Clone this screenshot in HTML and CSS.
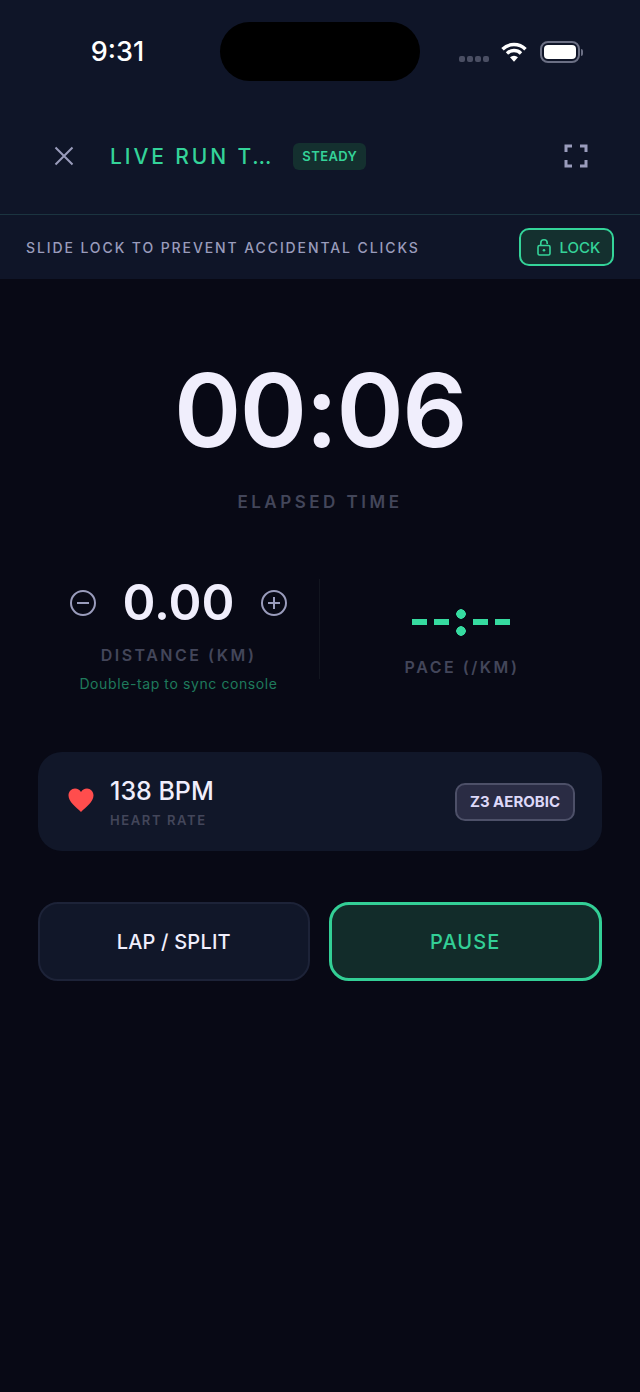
FILE: index.html
```html
<!DOCTYPE html>
<html lang="en">
<head>
  <meta charset="UTF-8" />
  <meta name="viewport" content="width=device-width, initial-scale=1.0" />
  <title>Live Run</title>
  <link rel="stylesheet" href="styles.css">
</head>
<body>
  <div class="top">
    <div class="status-bar">
      <span class="clock">9:31</span>
      <div class="island"></div>
      <div class="status-icons">
        <div class="signal"><i></i><i></i><i></i><i></i></div>
        <svg class="wifi" width="26" height="20" viewBox="0 0 26 20">
          <path d="M1.500 7.200a16.500 16.500 0 0 1 23 0" fill="none" stroke="#fff" stroke-width="3.500"/>
          <path d="M6 11.400a10.200 10.200 0 0 1 14 0" fill="none" stroke="#fff" stroke-width="3.500"/>
          <path d="M9 15.200a6 6 0 0 1 8 0l-4 4.600z" fill="#fff"/>
        </svg>
        <div class="battery"><div class="battery-fill"></div></div>
        <div class="battery-cap"></div>
      </div>
    </div>
    <header class="run-header">
      <button class="icon-btn close-btn" aria-label="Close">
        <svg width="20" height="20" viewBox="0 0 20 20"><path d="M1.500 1.500l17 17M18.500 1.500l-17 17" stroke="#9a9cbc" stroke-width="2" fill="none"/></svg>
      </button>
      <h1 class="run-title">LIVE RUN T…</h1>
      <span class="steady">STEADY</span>
      <button class="icon-btn full-btn" aria-label="Fullscreen">
        <svg width="24" height="24" viewBox="0 0 24 24"><path d="M2 8V2h6M16 2h6v6M2 16v6h6M22 16v6h-6" stroke="#9a9cbc" stroke-width="3" fill="none"/></svg>
      </button>
    </header>
    <div class="lock-bar">
      <span class="lock-hint">SLIDE LOCK TO PREVENT ACCIDENTAL CLICKS</span>
      <button class="lock-btn">
        <svg width="14" height="17" viewBox="0 0 14 17"><rect x="1" y="6.500" width="12" height="9.500" rx="1.500" fill="none" stroke="#34d399" stroke-width="1.600"/><path d="M3.800 6.500V4a3.200 3.200 0 0 1 6.400 0v1" fill="none" stroke="#34d399" stroke-width="1.600"/><circle cx="7" cy="11.200" r="1.300" fill="#34d399"/></svg>
        LOCK
      </button>
    </div>
  </div>

  <main class="main">
    <section class="timer">
      <div class="time">00:06</div>
      <div class="label time-label">ELAPSED TIME</div>
    </section>

    <section class="stats">
      <div class="stat stat-distance">
        <div class="distance-row">
          <svg width="28" height="28" viewBox="0 0 28 28"><circle cx="14" cy="14" r="12" fill="none" stroke="#9a9cbc" stroke-width="2"/><path d="M8 14h12" stroke="#9a9cbc" stroke-width="2"/></svg>
          <span class="distance">0.00</span>
          <svg width="28" height="28" viewBox="0 0 28 28"><circle cx="14" cy="14" r="12" fill="none" stroke="#9a9cbc" stroke-width="2"/><path d="M8 14h12M14 8v12" stroke="#9a9cbc" stroke-width="2"/></svg>
        </div>
        <div class="label">DISTANCE (KM)</div>
        <div class="sync-hint">Double-tap to sync console</div>
      </div>
      <div class="stat stat-pace">
        <div class="pace"><i></i><i></i><b></b><i></i><i></i></div>
        <div class="label">PACE (/KM)</div>
      </div>
    </section>

    <section class="hr-card">
      <svg class="heart" width="28" height="26" viewBox="0 0 28 26"><path d="M14 25C9 20 1.500 15 1.500 8.500 1.500 4.500 4.500 1.500 8 1.500c2.600 0 4.800 1.300 6 3.500 1.200-2.200 3.400-3.500 6-3.500 3.500 0 6.500 3 6.500 7C26.500 15 19 20 14 25z" fill="#ff4d4d"/></svg>
      <div class="hr-text">
        <div class="bpm">138 BPM</div>
        <div class="hr-label">HEART RATE</div>
      </div>
      <span class="zone">Z3 AEROBIC</span>
    </section>

    <section class="actions">
      <button class="action lap">LAP / SPLIT</button>
      <button class="action pause">PAUSE</button>
    </section>
  </main>
</body>
</html>
```
FILE: styles.css
```css
* {
  box-sizing: border-box;
}
html, body {
  height: 100%;
}
body {
  margin: 0;
  background-color: #080915;
  color: #f0eefc;
  font-family: Inter, "Liberation Sans", sans-serif;
  display: flex;
  flex-direction: column;
}
button {
  font-family: inherit;
  cursor: pointer;
}
.top {
  background-color: #0f1528;
}
.status-bar {
  height: 100px;
  padding-top: 22px;
  display: flex;
  align-items: flex-start;
  position: relative;
}
.clock {
  width: 235px;
  padding-top: 14px;
  text-align: center;
  font-size: 27px;
  font-weight: 500;
  color: #fff;
  line-height: 32px;
}
.island {
  position: absolute;
  left: 220px;
  top: 22px;
  width: 200px;
  height: 59px;
  background: #000;
  border-radius: 30px;
}
.status-icons {
  margin-left: 224px;
  padding-top: 19px;
  display: flex;
  align-items: center;
}
.signal {
  display: flex;
  gap: 2px;
  margin-top: 14px;
  margin-right: 12px;
}
.signal i {
  width: 6px;
  height: 6px;
  border-radius: 2px;
  background: #4a4e63;
}
.wifi {
  margin-right: 13px;
}
.battery {
  width: 40px;
  height: 22px;
  border: 2px solid #6b6f84;
  border-radius: 8px;
  padding: 2px;
}
.battery-fill {
  height: 100%;
  background: #fff;
  border-radius: 4px;
}
.battery-cap {
  width: 2px;
  height: 7px;
  margin-left: 1px;
  background: #6b6f84;
  border-radius: 0 2px 2px 0;
}
.run-header {
  height: 115px;
  padding: 0 0 2px 50px;
  display: flex;
  align-items: center;
  border-bottom: 1px solid #1b3440;
}
.icon-btn {
  background: none;
  border: none;
  padding: 0;
  display: flex;
}
.close-btn {
  margin-left: 4px;
}
.run-title {
  margin: 0 0 0 36px;
  font-size: 21px;
  font-weight: 500;
  letter-spacing: 2.900px;
  color: #34d399;
}
.steady {
  margin-left: 19px;
  padding: 6px 9px;
  background: #14302f;
  border-radius: 6px;
  font-size: 13px;
  font-weight: 600;
  letter-spacing: .4px;
  line-height: 15px;
  color: #34d399;
}
.full-btn {
  margin-left: auto;
  margin-right: 52px;
}
.lock-bar {
  height: 64px;
  padding: 0 26px;
  display: flex;
  align-items: center;
  justify-content: space-between;
}
.lock-hint {
  font-size: 14px;
  font-weight: 500;
  letter-spacing: 1.900px;
  line-height: 19px;
  color: #9a9cbc;
}
.lock-btn {
  width: 95px;
  height: 38px;
  display: flex;
  align-items: center;
  justify-content: center;
  gap: 9px;
  padding: 0 0 0 4px;
  background: #14302f;
  border: 2px solid #34d399;
  border-radius: 10px;
  font-size: 15px;
  font-weight: 500;
  color: #34d399;
}
.main {
  flex: 1;
  padding: 0 38px;
}
.timer {
  padding-top: 66px;
  text-align: center;
}
.time {
  font-size: 102px;
  font-weight: 600;
  line-height: 130px;
  letter-spacing: -1.500px;
  color: #f0eefc;
}
.label {
  font-size: 16px;
  font-weight: 600;
  letter-spacing: 2.500px;
  line-height: 20px;
  color: #43465a;
}
.time-label {
  margin-top: 17px;
  font-size: 17px;
  letter-spacing: 3.500px;
}
.stats {
  margin-top: 67px;
  height: 100px;
  display: flex;
}
.stat {
  flex: 1;
  display: flex;
  flex-direction: column;
  align-items: center;
}
.stat-distance {
  flex: 0 0 282px;
  border-right: 1px solid #12151f;
}
.distance-row {
  display: flex;
  align-items: center;
  gap: 25px;
  height: 47px;
}
.distance {
  font-size: 50px;
  font-weight: 600;
  line-height: 47px;
}
.stat-distance .label {
  margin-top: 19px;
}
.sync-hint {
  margin-top: 10px;
  font-size: 14px;
  letter-spacing: .6px;
  line-height: 18px;
  color: #1f7a5c;
}
.stat-pace .label {
  margin-top: 8px;
  padding-left: 2px;
}
.pace {
  height: 54px;
  margin-top: 16px;
  display: flex;
  align-items: center;
  gap: 7px;
}
.pace i {
  width: 15px;
  height: 6px;
  background: #36dba0;
}
.pace b {
  width: 10px;
  height: 27px;
  background: radial-gradient(circle at 50% 5px, #36dba0 4.500px, transparent 5px), radial-gradient(circle at 50% 22px, #36dba0 4.500px, transparent 5px);
}
.hr-card {
  margin-top: 73px;
  height: 99px;
  padding: 0 27px 0 29px;
  display: flex;
  align-items: center;
  background: #111729;
  border-radius: 24px;
}
.heart {
  margin-top: -4px;
}
.hr-text {
  margin-left: 15px;
}
.bpm {
  font-size: 25px;
  font-weight: 500;
  line-height: 30px;
}
.hr-label {
  margin-top: 6px;
  font-size: 13px;
  font-weight: 600;
  letter-spacing: 1.600px;
  line-height: 16px;
  color: #43465a;
}
.zone {
  margin-left: auto;
  width: 120px;
  height: 38px;
  display: flex;
  align-items: center;
  justify-content: center;
  background: #2a2c44;
  border: 2px solid #4d5068;
  border-radius: 10px;
  font-size: 15px;
  font-weight: 700;
  color: #ddd8f8;
}
.actions {
  margin-top: 51px;
  display: flex;
  gap: 19px;
}
.action {
  flex: 1;
  height: 79px;
  border-radius: 20px;
  font-size: 20px;
  font-weight: 500;
}
.lap {
  background: #111729;
  border: 2px solid #1d2338;
  color: #f0eefc;
  letter-spacing: .2px;
}
.pause {
  background: #122c2a;
  border: 3px solid #33cf96;
  color: #33cf96;
  letter-spacing: 1.100px;
}
```
